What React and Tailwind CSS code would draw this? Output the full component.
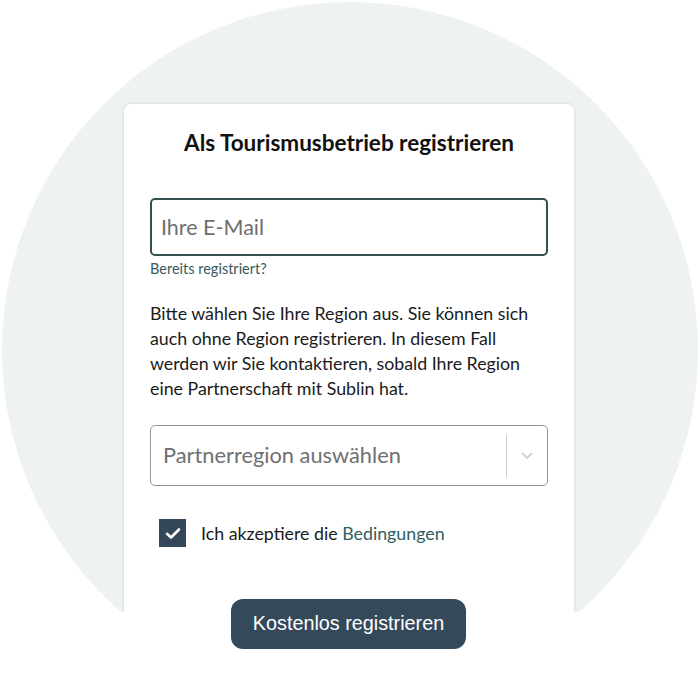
import React from 'react';

export default function App() {
  return (
    <div className="w-[700px] h-[700px] bg-white relative overflow-hidden" style={{ fontFamily: 'Lato, "Open Sans", sans-serif' }}>
      {/* backdrop circle + card, cut off at the bottom */}
      <div className="relative h-[612px] overflow-hidden">
        <div className="absolute left-[2px] top-[2px] w-[696px] h-[696px] rounded-full bg-[#eff2f3]" />
        <div className="relative ml-[123px] mt-[103px] w-[452px] h-[600px] bg-white rounded-t-[8px] border border-[#e3e6e7] shadow-[0_0_3px_rgba(0,0,0,0.06)] px-[26px] pt-[24px]">
          <h1 className="text-center text-[22.5px] leading-[30px] font-bold text-[#111]">
            Als Tourismusbetrieb registrieren
          </h1>

          <div className="mt-[40px] h-[58px] border-2 border-[#34504f] rounded-[5px] flex items-center px-[9px]">
            <span className="text-[21.5px] text-[#6f6f6f]">Ihre E-Mail</span>
          </div>
          <div className="mt-[4px] text-[14.5px] leading-[18px] text-[#3b5a5c]">Bereits registriert?</div>

          <p className="mt-[23px] text-[17.8px] leading-[25px] text-[#1a1a1a]">
            Bitte wählen Sie Ihre Region aus. Sie können sich auch ohne Region registrieren. In diesem Fall werden wir Sie kontaktieren, sobald Ihre Region eine Partnerschaft mit Sublin hat.
          </p>

          <div className="mt-[24px] h-[61px] border border-[#8b9898] rounded-[5px] flex items-center">
            <span className="flex-1 pl-[12px] text-[21.8px] text-[#707070]">Partnerregion auswählen</span>
            <div className="w-px h-[42px] bg-[#c8cccc]" />
            <div className="w-[40px] flex items-center justify-center">
              <svg width="12" height="8" viewBox="0 0 12 8" fill="none">
                <path d="M1.5 1.5 L6 6 L10.5 1.5" stroke="#c4c8c8" strokeWidth="1.6" strokeLinecap="round" strokeLinejoin="round" />
              </svg>
            </div>
          </div>

          <div className="mt-[33px] ml-[9px] flex items-center gap-[15px]">
            <div className="w-[27px] h-[28px] bg-[#34475a] flex items-center justify-center">
              <svg width="16" height="13" viewBox="0 0 16 13" fill="none">
                <path d="M2 6.8 L6 10.5 L14 2.5" stroke="white" strokeWidth="2.6" strokeLinecap="round" strokeLinejoin="round" />
              </svg>
            </div>
            <span className="text-[17.8px] text-[#1a1a1a]">
              Ich akzeptiere die <span className="text-[#2f5d62]">Bedingungen</span>
            </span>
          </div>
        </div>
      </div>

      <button
        className="relative -mt-[14px] ml-[231px] w-[235px] h-[50px] rounded-[12px] bg-[#34495a] text-white text-[19.8px]"
        style={{ fontFamily: '"Liberation Sans", Arial, sans-serif' }}
      >
        Kostenlos registrieren
      </button>
    </div>
  );
}
